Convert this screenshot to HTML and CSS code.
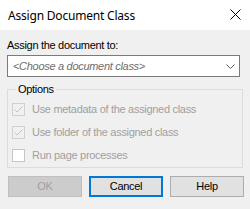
FILE: index.html
```html
<!DOCTYPE html>
<html>
<head>
<meta charset="utf-8">
<link rel="stylesheet" href="styles.css">
</head>
<body>
<div class="dialog">
  <div class="titlebar">
    <span class="title">Assign Document Class</span>
    <svg class="close" width="11" height="11" viewBox="0 0 11 11"><path d="M0.5 0.5 L10.5 10.5 M10.5 0.5 L0.5 10.5" stroke="#000" stroke-width="1" fill="none"/></svg>
  </div>
  <div class="content">
    <div class="label">Assign the document to:</div>
    <div class="combo">
      <span class="placeholder">&lt;Choose a document class&gt;</span>
      <svg class="chev" width="9" height="5" viewBox="0 0 9 5"><polyline points="0.5,0.5 4.5,4.5 8.5,0.5" stroke="#606060" stroke-width="1" fill="none"/></svg>
    </div>
    <fieldset class="group">
      <legend class="legend">Options</legend>
      <div class="row">
        <span class="box checked"><svg width="11" height="11" viewBox="0 0 11 11"><polyline points="1.5,5.5 4,8 9.5,2.5" stroke="#c4c4c4" stroke-width="1" fill="none"/></svg></span>
        <span class="text">Use metadata of the assigned class</span>
      </div>
      <div class="row">
        <span class="box checked"><svg width="11" height="11" viewBox="0 0 11 11"><polyline points="1.5,5.5 4,8 9.5,2.5" stroke="#c4c4c4" stroke-width="1" fill="none"/></svg></span>
        <span class="text">Use folder of the assigned class</span>
      </div>
      <div class="row">
        <span class="box empty"></span>
        <span class="text">Run page processes</span>
      </div>
    </fieldset>
    <div class="buttons">
      <div class="btn disabled">OK</div>
      <div class="btn focused">Cancel</div>
      <div class="btn">Help</div>
    </div>
  </div>
</div>
</body>
</html>
```
FILE: styles.css
```css
html, body {
  margin: 0;
  padding: 0;
}
body {
  width: 250px;
  height: 209px;
  background: #f0f0f0;
  font-family: "Liberation Sans", Arial, sans-serif;
  font-size: 11px;
  line-height: 13px;
  letter-spacing: -0.3px;
  color: #000;
  overflow: hidden;
}
.titlebar {
  height: 30px;
  background: #ffffff;
  display: flex;
  align-items: center;
  justify-content: space-between;
  padding: 0 9px 0 8px;
}
.title {
  font-family: "Noto Sans", "Open Sans", sans-serif;
  font-size: 12px;
  letter-spacing: -0.2px;
  color: #000;
}
.close {
  display: block;
  margin-top: -1px;
}
.content {
  padding: 9px 0 0 7px;
}
.label {
  height: 13px;
}
.combo {
  margin-top: 3px;
  width: 233px;
  height: 22px;
  box-sizing: border-box;
  border: 1px solid #7a7a7a;
  background: #fff;
  display: flex;
  align-items: center;
  justify-content: space-between;
  padding: 0 4px 0 5px;
}
.placeholder {
  font-style: italic;
  color: #6d6d6d;
}
.chev {
  display: block;
  margin-top: 1px;
}
.group {
  margin: 6px 0 0 0;
  padding: 2px 0 0 4px;
  width: 236px;
  box-sizing: border-box;
  border: 1px solid #dcdcdc;
  min-inline-size: 0;
}
.legend {
  margin-left: 4px;
  padding: 0 2px;
  line-height: 13px;
  color: #000;
}
.row {
  height: 23px;
  display: flex;
  align-items: center;
}
.box {
  width: 13px;
  height: 13px;
  box-sizing: border-box;
  border: 1px solid #cccccc;
  display: flex;
  align-items: center;
  justify-content: center;
  flex: none;
}
.box svg {
  display: block;
}
.box.checked {
  background: #f0f0f0;
  border-color: #d0d0d0;
}
.box.empty {
  background: #ffffff;
  border-color: #c6c6c6;
}
.text {
  margin-left: 7px;
  color: #a0a0a0;
}
.buttons {
  margin-top: 8px;
  margin-left: 1px;
  display: flex;
  gap: 7px;
}
.btn {
  width: 74px;
  height: 21px;
  box-sizing: border-box;
  border: 1px solid #adadad;
  background: #e1e1e1;
  display: flex;
  align-items: center;
  justify-content: center;
}
.btn.disabled {
  background: #cccccc;
  border-color: #bfbfbf;
  color: #a0a0a0;
}
.btn.focused {
  border: 2px solid #0078d7;
}
```
